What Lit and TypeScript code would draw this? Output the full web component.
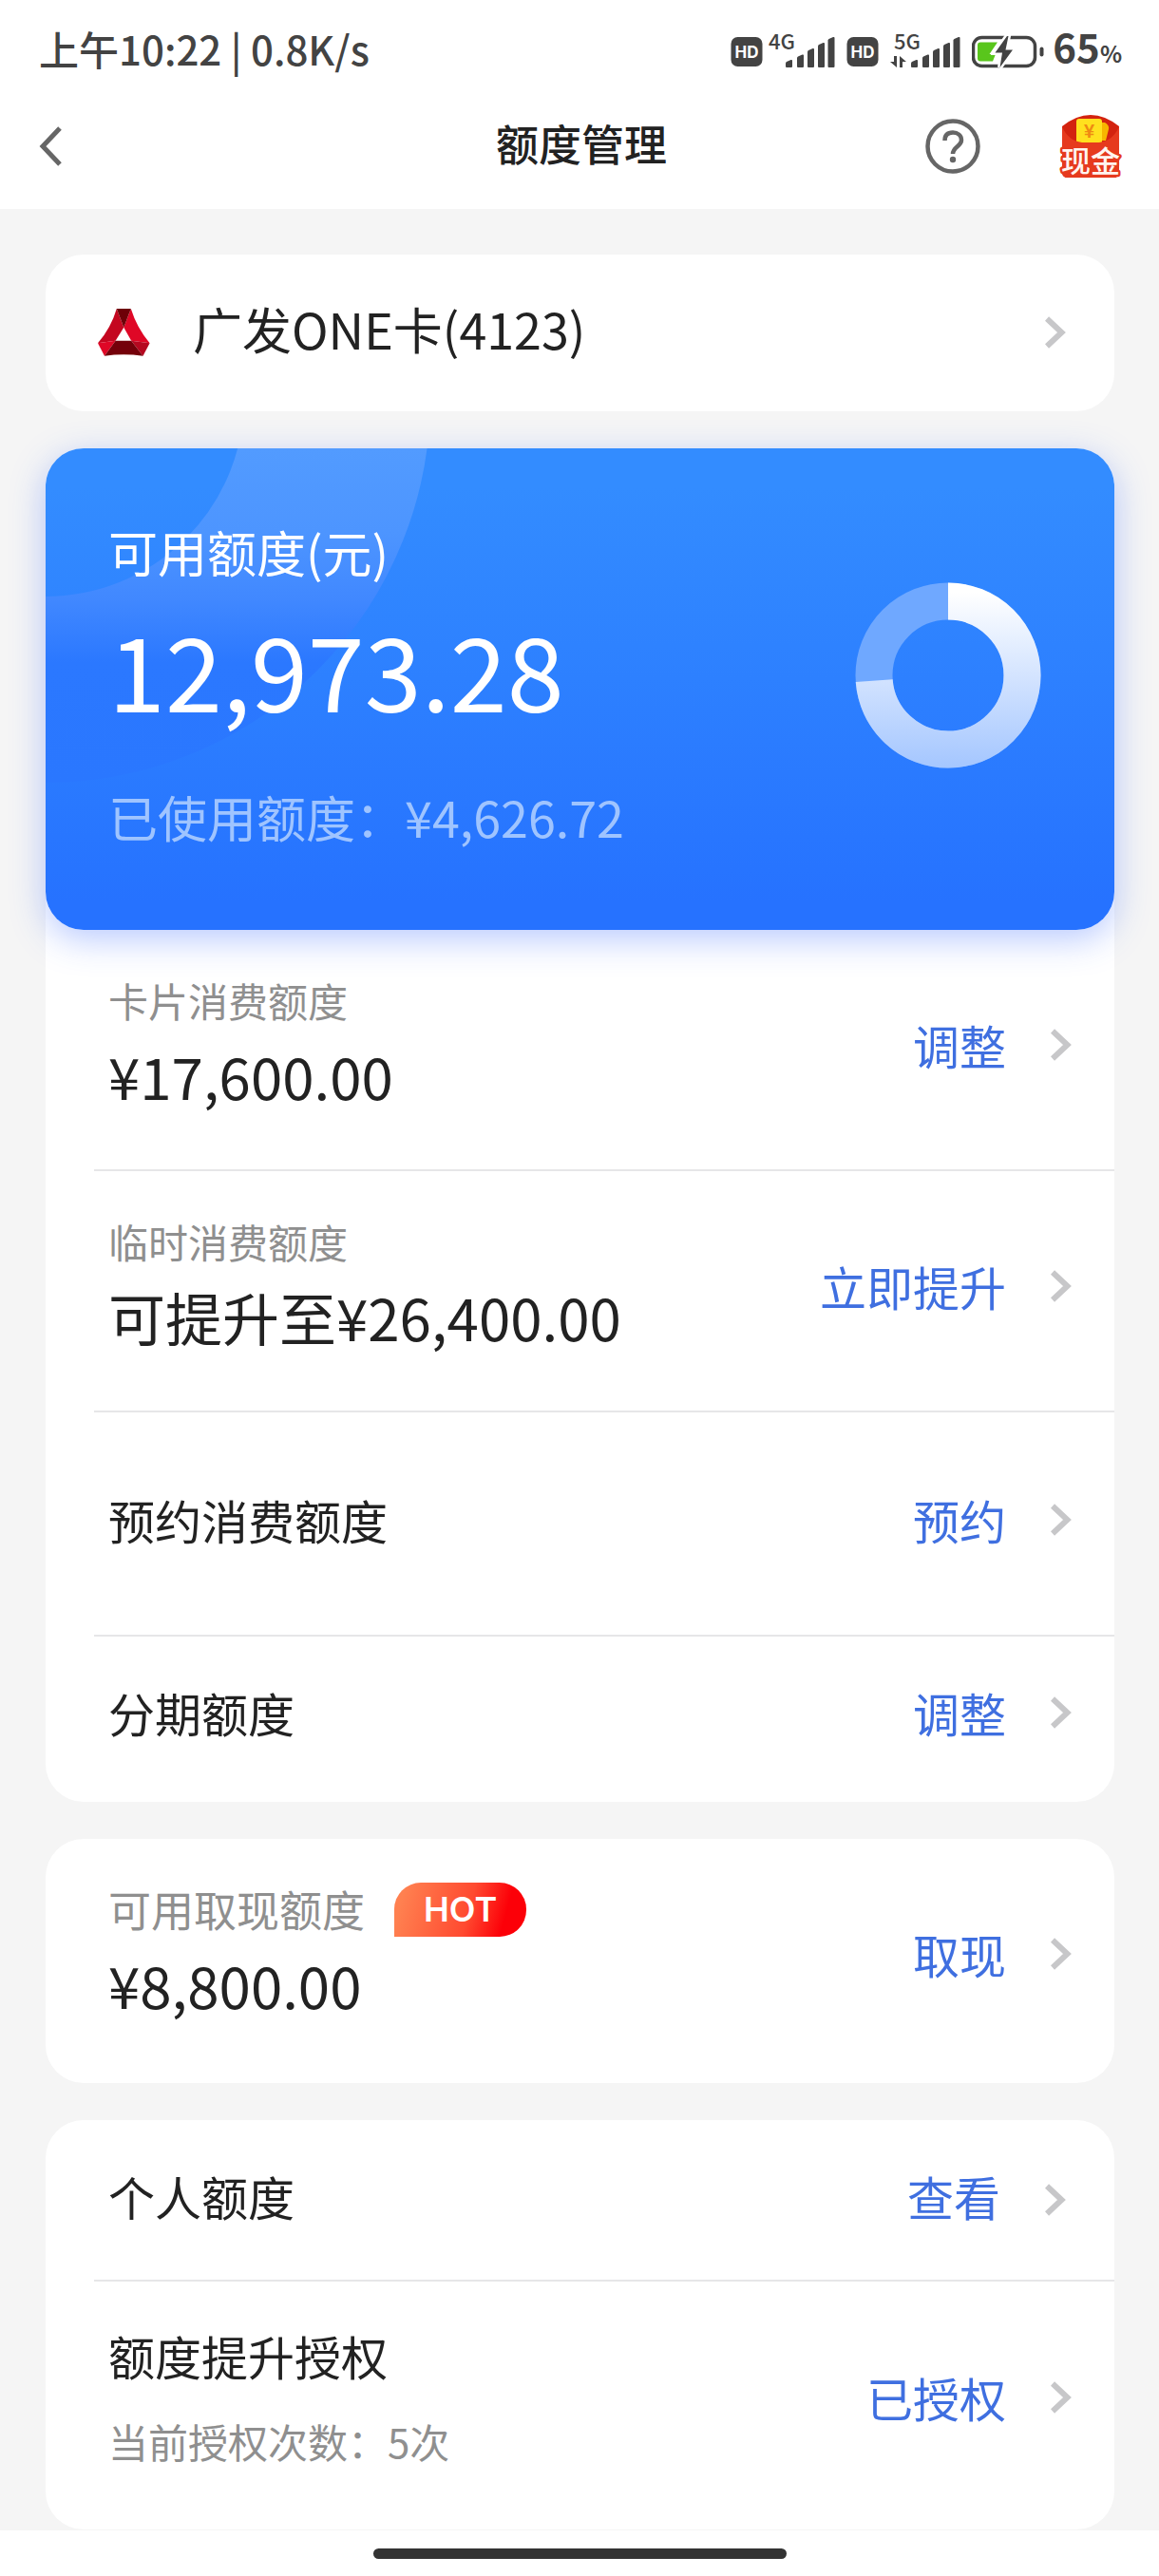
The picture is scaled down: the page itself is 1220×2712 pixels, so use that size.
import { LitElement, html, svg, css, nothing } from "lit";
import { customElement, property } from "lit/decorators.js";

interface LimitItem {
  kind: "stacked" | "roomy" | "compact" | "link" | "titled";
  label?: string;
  value?: string;
  title?: string;
  note?: string;
  badge?: string;
  action: string;
}

const AVAILABLE = 12973.28;
const USED = 4626.72;

const money = (n: number) =>
  n.toLocaleString("en-US", { minimumFractionDigits: 2, maximumFractionDigits: 2 });

const SPENDING: LimitItem[] = [
  { kind: "stacked", label: "卡片消费额度", value: "¥17,600.00", action: "调整" },
  { kind: "stacked", label: "临时消费额度", value: "可提升至¥26,400.00", action: "立即提升" },
  { kind: "roomy", title: "预约消费额度", action: "预约" },
  { kind: "compact", title: "分期额度", action: "调整" },
];

const CASH: LimitItem[] = [
  { kind: "stacked", label: "可用取现额度", value: "¥8,800.00", badge: "HOT", action: "取现" },
];

const PERSONAL: LimitItem[] = [
  { kind: "link", title: "个人额度", action: "查看" },
  { kind: "titled", title: "额度提升授权", note: "当前授权次数：5次", action: "已授权" },
];

const chevron = html`
  <svg width="22" height="34" viewBox="0 0 22 34" fill="none" stroke="#c7c7c9" stroke-width="6" aria-hidden="true">
    <path d="M2 2.500 17.500 17 2 31.500" />
  </svg>
`;

@customElement("limit-row")
export class LimitRow extends LitElement {
  @property({ attribute: false }) item!: LimitItem;

  static styles = css`
    :host {
      display: block;
    }
    .row {
      display: flex;
      align-items: center;
      justify-content: space-between;
      padding: 44px 45px 54px 66px;
    }
    .row.badged {
      padding-bottom: 59px;
    }
    .row.roomy {
      padding-top: 80px;
      padding-bottom: 88px;
    }
    .row.compact {
      padding-top: 47px;
      padding-bottom: 61px;
    }
    .row.titled {
      padding-top: 45px;
      padding-bottom: 63px;
    }
    .row.link {
      padding-top: 47px;
      padding-bottom: 47px;
      padding-right: 51px;
    }
    .link .title,
    .link .text {
      padding-bottom: 8px;
    }
    .head {
      display: flex;
      align-items: center;
      gap: 31px;
      height: 60px;
      margin-bottom: 4px;
    }
    .label,
    .note {
      font-size: 42px;
      line-height: 60px;
      color: #8f8f8f;
    }
    .badged .label {
      font-size: 45px;
    }
    .badge {
      padding: 0 31px;
      border-radius: 28px 28px 28px 0;
      background: linear-gradient(105deg, #ff8050 8%, #ff4a30 56%, #fc0008 82%);
      color: #fff;
      font: 600 36px/57px Inter, sans-serif;
    }
    .value {
      font-size: 60px;
      line-height: 90px;
      color: #222;
    }
    .title {
      font-size: 49px;
      line-height: 66px;
      color: #222;
    }
    .note {
      margin-top: 27px;
    }
    .action {
      display: flex;
      align-items: center;
      gap: 47px;
      font-size: 49px;
      line-height: 66px;
      color: #3f6fe0;
      text-decoration: none;
    }
  `;

  render() {
    const { kind, label, value, title, note, badge, action } = this.item;
    return html`
      <div class="row ${kind} ${badge ? "badged" : ""}">
        <div>
          ${label
            ? html`<div class="head">
                <span class="label">${label}</span>
                ${badge ? html`<span class="badge">${badge}</span>` : nothing}
              </div>`
            : nothing}
          ${value ? html`<div class="value">${value}</div>` : nothing}
          ${title ? html`<div class="title">${title}</div>` : nothing}
          ${note ? html`<div class="note">${note}</div>` : nothing}
        </div>
        <a class="action" href="#"><span class="text">${action}</span>${chevron}</a>
      </div>
    `;
  }
}

@customElement("status-bar")
export class StatusBar extends LitElement {
  static styles = css`
    :host {
      display: flex;
      align-items: center;
      justify-content: space-between;
      height: 68px;
      padding: 20px 39px 0 41px;
      color: #434343;
    }
    .clock {
      padding-bottom: 6px;
      font-size: 42px;
      font-weight: 500;
      line-height: 60px;
    }
    .icons {
      display: flex;
      align-items: center;
      gap: 12px;
    }
    .sim {
      display: flex;
      align-items: center;
      gap: 6px;
    }
    .power {
      display: flex;
      align-items: center;
      gap: 8px;
    }
    .percent {
      padding-bottom: 4px;
      font: 700 42px/60px "Noto Sans CJK SC", sans-serif;
    }
    .percent small {
      font-size: 24px;
    }
    svg {
      display: block;
    }
    .net {
      font: 500 22px "Noto Sans CJK SC", sans-serif;
    }
    .hd {
      font: 700 17px Inter, sans-serif;
    }
  `;

  private hd() {
    return html`
      <svg width="34" height="44" viewBox="0 0 34 44" fill="#434343">
        <rect x="0.500" y="7" width="33" height="31" rx="7" />
        <text class="hd" x="17" y="28.500" fill="#fff" text-anchor="middle">HD</text>
      </svg>
    `;
  }

  private bars(x: number) {
    const tops = [31, 25.5, 19, 13, 7];
    const lefts = [0, 12, 23, 34, 44.5];
    return tops.map(
      (t, i) => svg`<path d="M${x + lefts[i]} ${t + 3.5}q0-1 1-1.500l4.500-2q1.500-.5 1.500 1V38q0 1-1 1h-5q-1 0-1-1z" />`
    );
  }

  render() {
    return html`
      <div class="clock">上午10:22 | 0.8K/s</div>
      <div class="icons">
        <div class="sim">
          ${this.hd()}
          <svg width="70" height="64" viewBox="0 -10 70 64" fill="#434343">
            <text class="net" x="0" y="20">4G</text>
            ${this.bars(18)}
          </svg>
        </div>
        <div class="sim">
          ${this.hd()}
          <svg width="80" height="64" viewBox="0 -10 80 64" fill="#434343">
            <text class="net" x="10" y="20">5G</text>
            <path d="M10 27h3v12l-7-6h4zM16 39h3v-6h4l-7-6z" />
            ${this.bars(28)}
          </svg>
        </div>
        <div class="power">
          <svg width="77" height="44" viewBox="0 0 77 44" fill="none">
            <rect x="1.500" y="7.500" width="65" height="30" rx="9" stroke="#434343" stroke-width="3.500" />
            <rect x="71.500" y="17.500" width="4" height="10" rx="2" fill="#434343" />
            <path d="M9 12.500H27L18.500 25H25L22 32.500H9Q6 32.500 6 29.500V15.500Q6 12.500 9 12.500Z" fill="#59c61c" />
            <path d="M37 6 24.500 23.500H32L29.500 39 43 20.500H35.500L38.500 6Z" fill="#434343" stroke="#fff" stroke-width="5" paint-order="stroke" />
          </svg>
          <span class="percent">65<small>%</small></span>
        </div>
      </div>
    `;
  }
}

@customElement("app-root")
export class AppRoot extends LitElement {
  static styles = css`
    :host {
      display: flex;
      flex-direction: column;
      min-height: 100vh;
      background: #f5f5f5;
      color: #222;
      font-family: "Noto Sans CJK SC", sans-serif;
    }
    .top {
      background: #fff;
    }
    .nav {
      display: grid;
      grid-template-columns: 1fr auto 1fr;
      align-items: center;
      height: 132px;
      padding: 0 37px 0 41px;
    }
    .nav h1 {
      margin: 0;
      padding-bottom: 6px;
      font-size: 45px;
      font-weight: 500;
      line-height: 66px;
    }
    .nav button {
      display: block;
      padding: 0;
      border: 0;
      background: none;
    }
    .nav svg {
      display: block;
    }
    .tools {
      display: flex;
      align-items: center;
      justify-content: flex-end;
      gap: 81px;
    }
    .cash {
      font: 500 31px "Noto Sans CJK SC", sans-serif;
    }
    .yen {
      font: 700 20px "Liberation Sans", sans-serif;
    }
    main {
      display: flex;
      flex-direction: column;
      gap: 39px;
      padding: 48px 47px 0 48px;
      flex: 1;
    }
    .panel {
      border-radius: 40px;
      background: #fff;
    }
    .account {
      display: flex;
      align-items: center;
      padding: 45px 51px 46px 55px;
      color: inherit;
      text-decoration: none;
    }
    .account .name {
      flex: 1;
      padding: 0 0 8px 45px;
      font-size: 52px;
      line-height: 66px;
    }
    .divider {
      height: 2px;
      margin-left: 51px;
      background: #e6e6e8;
    }
    .hero {
      position: relative;
      display: flex;
      align-items: center;
      justify-content: space-between;
      padding: 76px 77px 86px 66px;
      border-radius: 40px;
      background: linear-gradient(180deg, #338cff 8%, #2672ff 94%);
      box-shadow: 0 10px 36px rgba(50, 100, 255, 0.34);
      color: #fff;
    }
    .arc {
      position: absolute;
      left: 0;
      top: 0;
      border-top-left-radius: 40px;
    }
    .figures {
      position: relative;
    }
    .caption,
    .used {
      font-size: 52px;
      line-height: 66px;
    }
    .amount {
      margin: 11px 0 46px;
      font-size: 108px;
      line-height: 156px;
    }
    .used {
      color: #9fc4ff;
    }
    .donut {
      display: block;
      margin-bottom: 20px;
    }
    footer {
      display: flex;
      justify-content: center;
      padding: 19px 0 18px;
      background: #fff;
    }
    .pill {
      width: 435px;
      height: 11px;
      border-radius: 6px;
      background: #333;
    }
  `;

  private list(items: LimitItem[]) {
    return items.map(
      (item, i) => html`
        ${i ? html`<div class="divider"></div>` : nothing}
        <limit-row .item=${item}></limit-row>
      `
    );
  }

  private donut() {
    const r = 78;
    const len = 2 * Math.PI * r;
    const share = AVAILABLE / (AVAILABLE + USED);
    return html`
      <svg class="donut" width="196" height="196" viewBox="0 0 196 196" fill="none" role="img" aria-label="可用额度">
        <defs>
          <linearGradient id="fill" gradientUnits="userSpaceOnUse" x1="0" y1="0" x2="186" y2="0">
            <stop offset="0" stop-color="#a4c6ff" />
            <stop offset="1" stop-color="#ffffff" />
          </linearGradient>
        </defs>
        <circle cx="98" cy="98" r=${r} stroke="#6fa8ff" stroke-width="39" />
        <circle cx="98" cy="98" r=${r} stroke="url(#fill)" stroke-width="39"
          stroke-dasharray="${share * len} ${len}" transform="rotate(-90 98 98)" />
      </svg>
    `;
  }

  render() {
    return html`
      <header class="top">
        <status-bar></status-bar>
        <nav class="nav">
          <button type="button" aria-label="返回">
            <svg width="25" height="42" viewBox="0 0 25 42" fill="none" stroke="#666" stroke-width="5">
              <path d="M22 2 4 21 22 40" />
            </svg>
          </button>
          <h1>额度管理</h1>
          <div class="tools">
            <button type="button" aria-label="帮助">
              <svg width="58" height="58" viewBox="0 0 58 58" fill="none" stroke="#666" stroke-width="4.500">
                <circle cx="29" cy="29" r="26.500" />
                <path d="M20.500 23C20.500 17 24 14.500 29 14.500S38 17.500 38 22.500C38 29 29 29.500 29 37" />
                <circle cx="29" cy="43" r="3.200" fill="#666" stroke="none" />
              </svg>
            </button>
            <button type="button" aria-label="现金">
              <svg width="70" height="76" viewBox="-2 -5 70 76">
                <path d="M3 12Q33-12 63 12V60Q63 66 57 66H9Q3 66 3 60Z" fill="#d3230f" />
                <path d="M40 8h8q5 3 4 7l-3 12H36z" fill="#f7b500" />
                <rect x="18" y="4" width="27" height="27" rx="3" fill="#ffe01e" />
                <text class="yen" x="31.500" y="24" text-anchor="middle" fill="#ef8a12">¥</text>
                <path d="M3 12Q9 27 24 29H42Q57 27 63 12V60Q63 66 57 66H9Q3 66 3 60Z" fill="#e63a1e" />
                <text class="cash" x="33" y="60" text-anchor="middle" fill="#fff5f0" stroke="#e63a1e" stroke-width="5" stroke-linejoin="round" paint-order="stroke">现金</text>
              </svg>
            </button>
          </div>
        </nav>
      </header>

      <main>
        <a class="panel account" href="#">
          <svg width="55" height="50" viewBox="0 0 55 50" aria-hidden="true">
            <path d="M19.800 0 27.300 19.700 18.600 33.700 0 36.300Q14 20 19.800 0Z" fill="#c40720" />
            <path d="M34.800 0 27.300 19.700 35.200 33.700 54.600 36.300Q41 20 34.800 0Z" fill="#df0726" />
            <path d="M19.800 0H34.800L27.300 19.700Z" fill="#6d0007" />
            <path d="M0 36.300 18.600 33.700 7 49.700Z" fill="#df0726" />
            <path d="M54.600 36.300 35.200 33.700 47.500 49.700Z" fill="#b50820" />
            <path d="M18.600 33.700H35.200L47.500 49.700Q27 47 7 49.700Z" fill="#74000a" />
          </svg>
          <span class="name">广发ONE卡(4123)</span>
          ${chevron}
        </a>

        <div class="panel">
          <section class="hero">
            <svg class="arc" width="410" height="360" viewBox="0 0 410 360" fill="none" aria-hidden="true">
              <defs>
                <linearGradient id="arc" gradientUnits="userSpaceOnUse" x1="0" y1="0" x2="0" y2="352">
                  <stop offset="0" stop-color="#529bff" />
                  <stop offset="0.250" stop-color="#4d95ff" />
                  <stop offset="0.450" stop-color="#4188ff" />
                  <stop offset="0.640" stop-color="#2b78ff" />
                  <stop offset="1" stop-color="#2a77ff" />
                </linearGradient>
              </defs>
              <circle cx="0" cy="-53" r="307" stroke="url(#arc)" stroke-width="196" />
            </svg>
            <div class="figures">
              <div class="caption">可用额度(元)</div>
              <div class="amount">${money(AVAILABLE)}</div>
              <div class="used">已使用额度：¥${money(USED)}</div>
            </div>
            ${this.donut()}
          </section>
          ${this.list(SPENDING)}
        </div>

        <section class="panel">${this.list(CASH)}</section>
        <section class="panel">${this.list(PERSONAL)}</section>
      </main>

      <footer><div class="pill"></div></footer>
    `;
  }
}
